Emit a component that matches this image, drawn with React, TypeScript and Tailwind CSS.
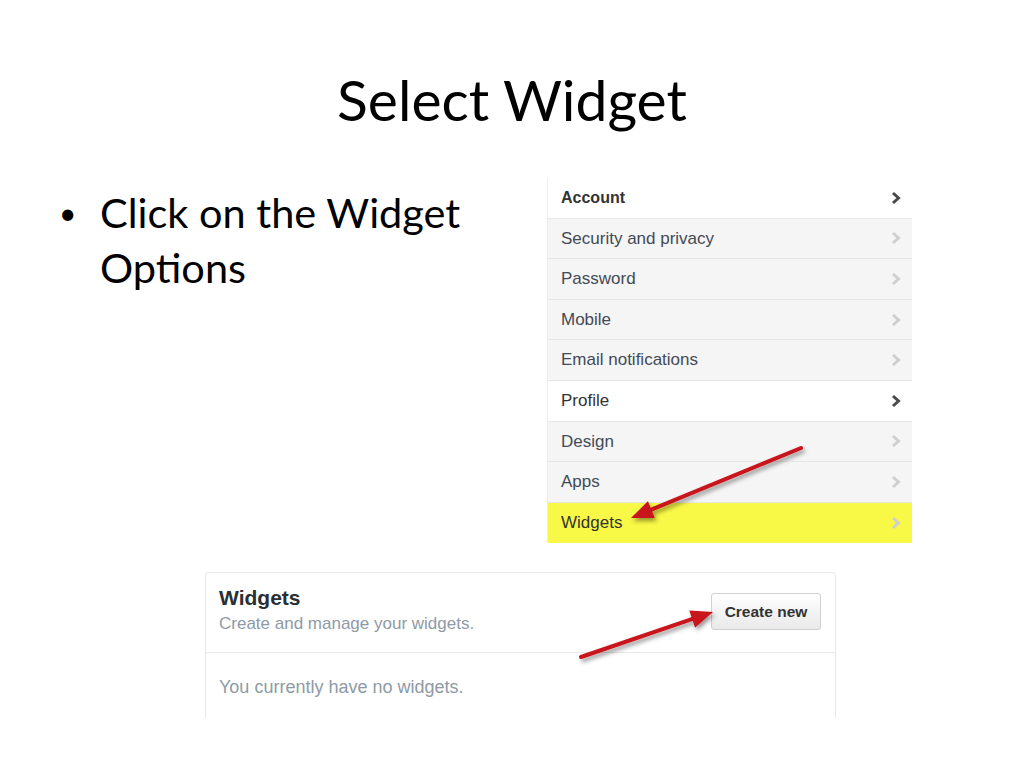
import React from 'react';

const rows = [
  { label: 'Account', head: true },
  { label: 'Security and privacy' },
  { label: 'Password' },
  { label: 'Mobile' },
  { label: 'Email notifications' },
  { label: 'Profile', head: true },
  { label: 'Design' },
  { label: 'Apps' },
  { label: 'Widgets', hl: true },
];

function Chevron({ dark }: { dark?: boolean }) {
  return (
    <svg width="12" height="14" viewBox="0 0 12 14">
      <polyline
        points="3,2 8.5,7 3,12"
        fill="none"
        stroke={dark ? '#4a4a4a' : '#cfcfcf'}
        strokeWidth="3"
        strokeLinejoin="miter"
      />
    </svg>
  );
}

function Arrow({ x1, y1, x2, y2 }: { x1: number; y1: number; x2: number; y2: number }) {
  const a = Math.atan2(y2 - y1, x2 - x1);
  const len = 22;
  const half = 9;
  const bx = x2 - len * Math.cos(a);
  const by = y2 - len * Math.sin(a);
  const p1 = `${bx + half * Math.sin(a)},${by - half * Math.cos(a)}`;
  const p2 = `${bx - half * Math.sin(a)},${by + half * Math.cos(a)}`;
  return (
    <g filter="url(#shadow)">
      <line x1={x1} y1={y1} x2={bx + 2 * Math.cos(a)} y2={by + 2 * Math.sin(a)} stroke="#c8121a" strokeWidth="4" strokeLinecap="round" />
      <polygon points={`${x2},${y2} ${p1} ${p2}`} fill="#c8121a" />
    </g>
  );
}

export default function App() {
  return (
    <div className="relative w-[1024px] h-[768px] bg-white overflow-hidden" style={{ fontFamily: 'Lato, "Open Sans", sans-serif' }}>
      {/* title */}
      <h1 className="pt-[64px] text-center text-[57px] leading-[70px] text-black" style={{ fontFamily: 'Lato, sans-serif' }}>
        Select Widget
      </h1>

      <div className="flex mt-[34px]">
        {/* bullet */}
        <div className="pl-[59px] w-[480px] flex items-start pt-[17px] text-[41.5px] leading-[55px] text-black">
          <span className="w-[41px] shrink-0 text-[30px]">•</span>
          <span>Click on the Widget<br />Options</span>
        </div>

        {/* settings menu */}
        <div className="ml-[67px] w-[365px] mt-[10px] border-l border-[#eeeeee]" style={{ fontFamily: '"Liberation Sans", Arial, sans-serif' }}>
          {rows.map(r => (
            <div
              key={r.label}
              className={
                'h-[40.6px] flex items-center justify-between pl-[13px] pr-[10px] border-b text-[17px] ' +
                (r.hl
                  ? 'bg-[#f8f846] border-[#f8f846] text-[#333333]'
                  : r.head
                    ? 'bg-white border-[#e8e8e8] text-[#333333]'
                    : 'bg-[#f5f5f5] border-[#e6e6e6] text-[#434a57]')
              }
            >
              <span className={r.label === 'Account' ? 'font-bold text-[16px]' : ''}>{r.label}</span>
              <Chevron dark={r.head} />
            </div>
          ))}
        </div>
      </div>

      {/* widgets card */}
      <div
        className="ml-[205px] mt-[29px] w-[631px] h-[146px] rounded-t-[4px] border border-b-0 border-[#e8e8e8] bg-white"
        style={{ fontFamily: '"Liberation Sans", Arial, sans-serif' }}
      >
        <div className="flex justify-between items-start pl-[13px] pr-[14px] pt-[13px] h-[80px] border-b border-[#e8e8e8]">
          <div>
            <div className="text-[21px] leading-[24px] font-bold text-[#292f33]">Widgets</div>
            <div className="text-[17px] leading-[22px] mt-[3px] text-[#8e9aa5]">Create and manage your widgets.</div>
          </div>
          <button className="mt-[7px] w-[110px] h-[37px] rounded-[3px] border border-[#d0d0d0] bg-gradient-to-b from-white to-[#e9e9e9] text-[15.5px] font-bold text-[#333333]">
            Create new
          </button>
        </div>
        <div className="pl-[13px] pt-[21px] text-[18px] text-[#8e9aa5]">You currently have no widgets.</div>
      </div>

      {/* annotation arrows */}
      <svg className="absolute inset-0 pointer-events-none" width="1024" height="768">
        <defs>
          <filter id="shadow" x="-20%" y="-50%" width="140%" height="200%">
            <feDropShadow dx="2" dy="3" stdDeviation="2" floodColor="#000" floodOpacity="0.4" />
          </filter>
        </defs>
        <Arrow x1={801} y1={448} x2={631} y2={518} />
        <Arrow x1={581} y1={657} x2={713} y2={612} />
      </svg>
    </div>
  );
}
